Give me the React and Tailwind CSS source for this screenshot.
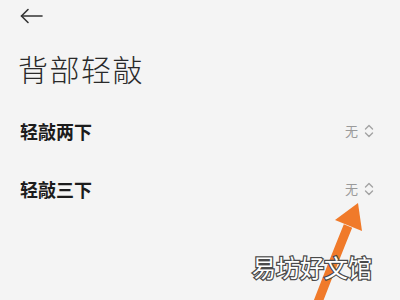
import React from 'react'

const Row = ({ label }) => (
  <div className="flex items-center justify-between h-[58px] pl-5 pr-[26px]">
    <span className="text-[18px] font-bold text-[#1c1c1c] leading-none">{label}</span>
    <span className="flex items-center gap-[6px] text-[13px] text-[#9a9a9a]">
      无
      <svg width="10" height="16" viewBox="0 0 10 16" fill="none" stroke="#a3a3a3" strokeWidth="1.4" strokeLinecap="round" strokeLinejoin="round">
        <path d="M1.5 6 L5 2.5 L8.5 6" />
        <path d="M1.5 10 L5 13.5 L8.5 10" />
      </svg>
    </span>
  </div>
)

const App = () => {
  return (
    <div className="relative w-[400px] h-[300px] overflow-hidden bg-[#f4f4f4] font-['Noto_Sans_CJK_SC','Noto_Sans',sans-serif]">

      {/* Back */}
      <div className="h-[32px] pl-5 pt-[8px]">
        <svg width="24" height="16" viewBox="0 0 24 16" fill="none" stroke="#333" strokeWidth="1.6" strokeLinecap="round" strokeLinejoin="round">
          <path d="M1.5 8 H22" />
          <path d="M8 1.5 L1.5 8 L8 14.5" />
        </svg>
      </div>

      {/* Title */}
      <h1 className="pl-[18px] mt-[21px] text-[30px] font-light tracking-[1.5px] text-[#2a2a2a] leading-none">
        背部轻敲
      </h1>

      {/* Options */}
      <div className="mt-[19px] flex flex-col">
        <Row label="轻敲两下" />
        <Row label="轻敲三下" />
      </div>

      {/* Orange pointer */}
      <svg className="absolute left-0 top-0" width="400" height="300" viewBox="0 0 400 300">
        <path d="M348 226 Q335 258 318 302" stroke="#f07a2a" strokeWidth="9" fill="none" />
        <polygon points="358,203 335,220 362,231" fill="#f07a2a" />
      </svg>

      {/* Watermark */}
      <div className="absolute left-[252px] top-[255px] text-[24px] font-normal leading-none text-white [-webkit-text-stroke:2.5px_#4a4a4a] [paint-order:stroke_fill]">
        易坊好文馆
      </div>

    </div>
  )
}

export default App
